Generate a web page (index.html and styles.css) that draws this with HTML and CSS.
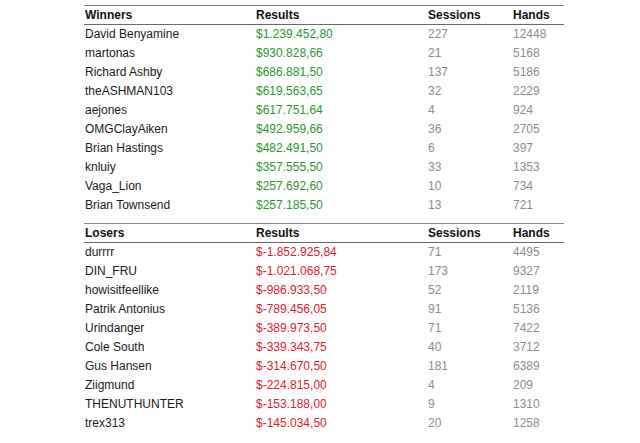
FILE: index.html
```html
<!DOCTYPE html>
<html>
<head>
<meta charset="utf-8">
<link rel="stylesheet" href="styles.css">
</head>
<body>
<div class="page">
<table class="stats">
<colgroup><col class="c-name"><col class="c-res"><col class="c-ses"><col class="c-hands"></colgroup>
<thead><tr><th>Winners</th><th>Results</th><th>Sessions</th><th>Hands</th></tr></thead>
<tbody>
<tr><td>David Benyamine</td><td class="win">$1.239.452,80</td><td class="num">227</td><td class="num">12448</td></tr>
<tr><td>martonas</td><td class="win">$930.828,66</td><td class="num">21</td><td class="num">5168</td></tr>
<tr><td>Richard Ashby</td><td class="win">$686.881,50</td><td class="num">137</td><td class="num">5186</td></tr>
<tr><td>theASHMAN103</td><td class="win">$619.563,65</td><td class="num">32</td><td class="num">2229</td></tr>
<tr><td>aejones</td><td class="win">$617.751,64</td><td class="num">4</td><td class="num">924</td></tr>
<tr><td>OMGClayAiken</td><td class="win">$492.959,66</td><td class="num">36</td><td class="num">2705</td></tr>
<tr><td>Brian Hastings</td><td class="win">$482.491,50</td><td class="num">6</td><td class="num">397</td></tr>
<tr><td>knluiy</td><td class="win">$357.555,50</td><td class="num">33</td><td class="num">1353</td></tr>
<tr><td>Vaga_Lion</td><td class="win">$257.692,60</td><td class="num">10</td><td class="num">734</td></tr>
<tr><td>Brian Townsend</td><td class="win">$257.185,50</td><td class="num">13</td><td class="num">721</td></tr>
</tbody>
</table>
<table class="stats losers">
<colgroup><col class="c-name"><col class="c-res"><col class="c-ses"><col class="c-hands"></colgroup>
<thead><tr><th>Losers</th><th>Results</th><th>Sessions</th><th>Hands</th></tr></thead>
<tbody>
<tr><td>durrrr</td><td class="loss">$-1.852.925,84</td><td class="num">71</td><td class="num">4495</td></tr>
<tr><td>DIN_FRU</td><td class="loss">$-1.021.068,75</td><td class="num">173</td><td class="num">9327</td></tr>
<tr><td>howisitfeellike</td><td class="loss">$-986.933,50</td><td class="num">52</td><td class="num">2119</td></tr>
<tr><td>Patrik Antonius</td><td class="loss">$-789.456,05</td><td class="num">91</td><td class="num">5136</td></tr>
<tr><td>Urindanger</td><td class="loss">$-389.973,50</td><td class="num">71</td><td class="num">7422</td></tr>
<tr><td>Cole South</td><td class="loss">$-339.343,75</td><td class="num">40</td><td class="num">3712</td></tr>
<tr><td>Gus Hansen</td><td class="loss">$-314.670,50</td><td class="num">181</td><td class="num">6389</td></tr>
<tr><td>Ziigmund</td><td class="loss">$-224.815,00</td><td class="num">4</td><td class="num">209</td></tr>
<tr><td>THENUTHUNTER</td><td class="loss">$-153.188,00</td><td class="num">9</td><td class="num">1310</td></tr>
<tr><td>trex313</td><td class="loss">$-145.034,50</td><td class="num">20</td><td class="num">1258</td></tr>
</tbody>
</table>
</div>
</body>
</html>
```
FILE: styles.css
```css
html, body {
  margin: 0;
  padding: 0;
  background: #ffffff;
}
.page {
  padding: 5px 0 0 84px;
  font-family: "Liberation Sans", Arial, sans-serif;
  font-size: 12px;
}
.stats {
  width: 480px;
  border-collapse: collapse;
  table-layout: fixed;
}
.losers {
  margin-top: 8px;
}
.c-name { width: 171px; }
.c-res { width: 172px; }
.c-ses { width: 85px; }
.c-hands { width: 52px; }
.stats th {
  text-align: left;
  font-weight: bold;
  color: #111;
  height: 18px;
  padding: 0 0 0 1px;
  border-top: 1px solid #8a8a8a;
  border-bottom: 1px solid #6a6a6a;
  line-height: 18px;
}
.stats td {
  height: 19px;
  padding: 0 0 0 1px;
  line-height: 19px;
  color: #1a1a1a;
  white-space: nowrap;
}
.win { color: #2e9631 !important; }
.loss { color: #e0202c !important; }
.num { color: #8c8c8c !important; }
```
